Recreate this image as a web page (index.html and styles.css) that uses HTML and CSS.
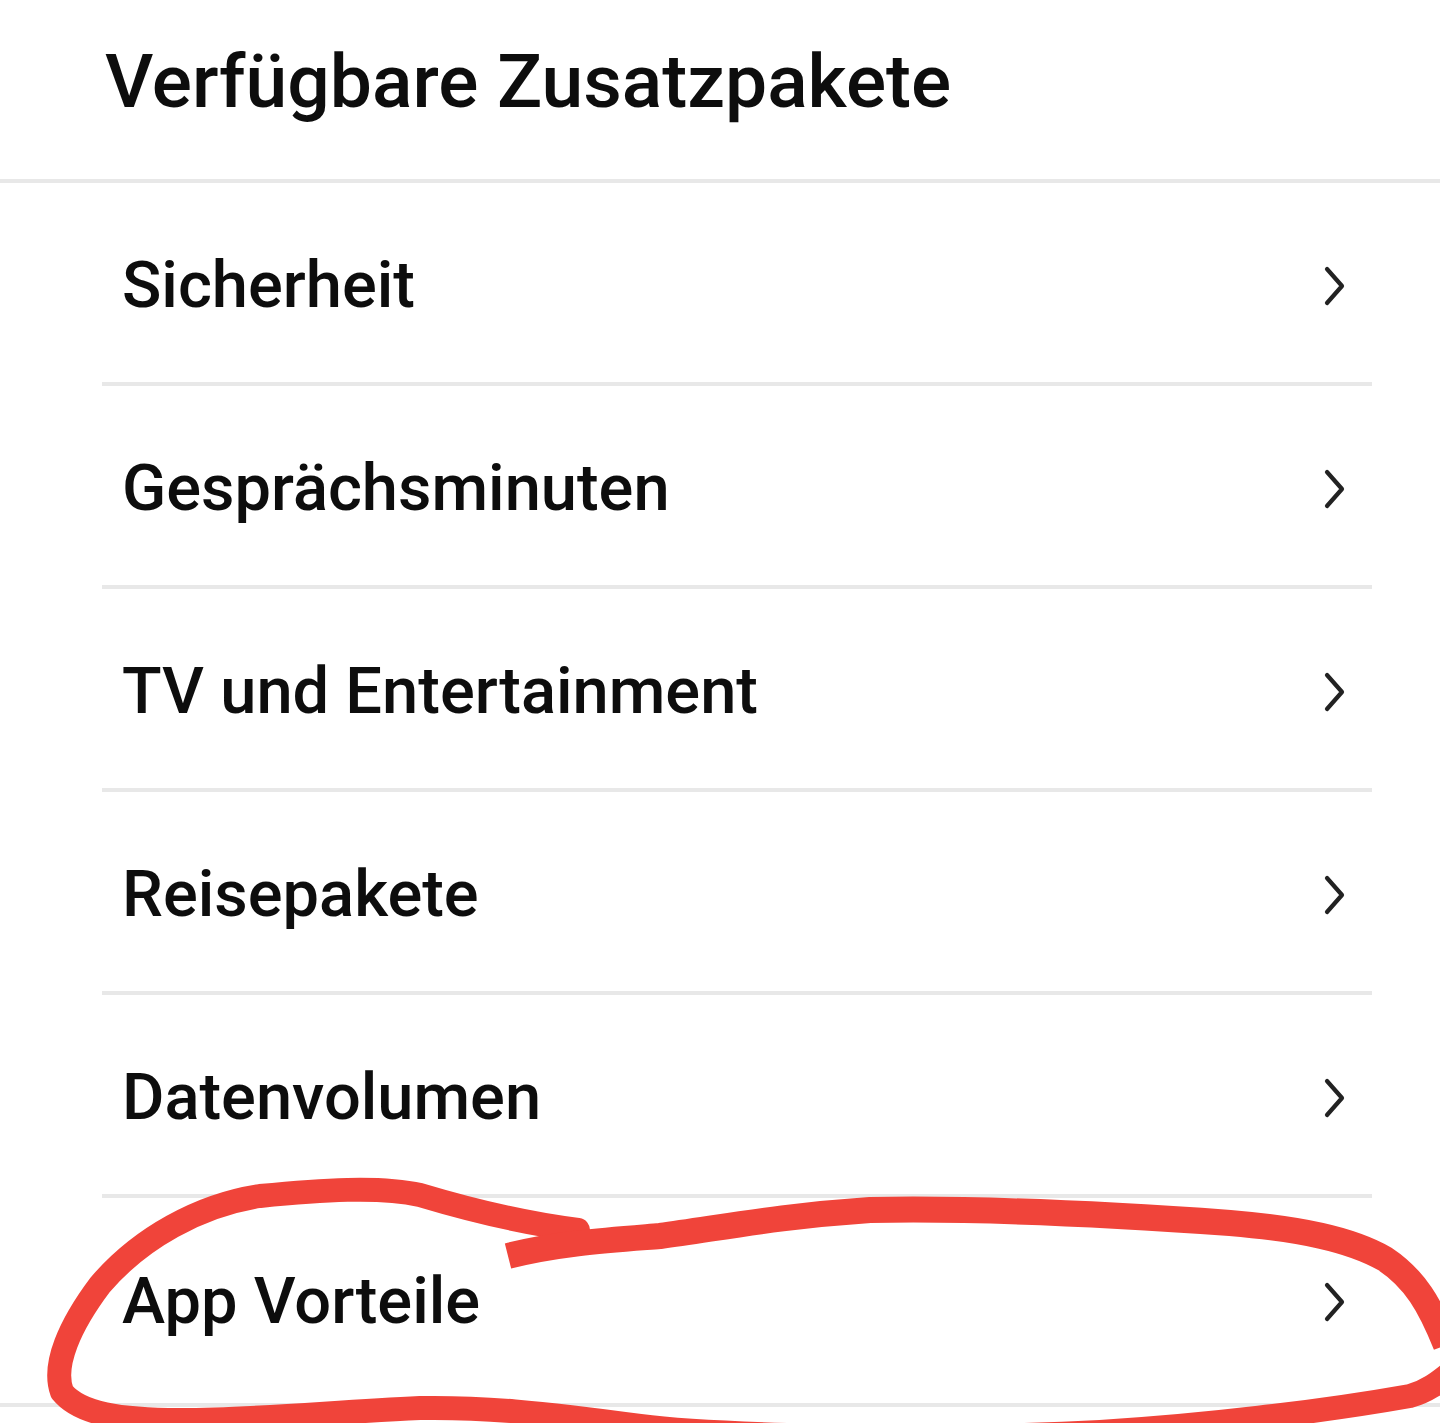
FILE: index.html
```html
<!DOCTYPE html>
<html lang="de">
<head>
<meta charset="utf-8">
<title>Verfügbare Zusatzpakete</title>
<link rel="stylesheet" href="styles.css">
</head>
<body>
<main class="page">
  <header class="head">
    <h1 class="title">Verfügbare Zusatzpakete</h1>
  </header>
  <ul class="list">
    <li class="item"><span class="label">Sicherheit</span><svg class="chevron" viewBox="0 0 24 40" width="24" height="40"><path d="M4 3 L19 20 L4 37"/></svg></li>
    <li class="item"><span class="label">Gesprächsminuten</span><svg class="chevron" viewBox="0 0 24 40" width="24" height="40"><path d="M4 3 L19 20 L4 37"/></svg></li>
    <li class="item"><span class="label">TV und Entertainment</span><svg class="chevron" viewBox="0 0 24 40" width="24" height="40"><path d="M4 3 L19 20 L4 37"/></svg></li>
    <li class="item"><span class="label">Reisepakete</span><svg class="chevron" viewBox="0 0 24 40" width="24" height="40"><path d="M4 3 L19 20 L4 37"/></svg></li>
    <li class="item"><span class="label">Datenvolumen</span><svg class="chevron" viewBox="0 0 24 40" width="24" height="40"><path d="M4 3 L19 20 L4 37"/></svg></li>
    <li class="item item-last"><span class="label">App Vorteile</span><svg class="chevron" viewBox="0 0 24 40" width="24" height="40"><path d="M4 3 L19 20 L4 37"/></svg></li>
  </ul>
  <div class="rule"></div>
  <svg class="scribble" viewBox="0 0 1440 1423" width="1440" height="1423">
    <path class="ink ink-thin" d="M578 1230 C 530 1224, 470 1210, 420 1195 C 380 1186, 320 1190, 260 1196 C 200 1205, 140 1238, 100 1285 C 70 1325, 52 1365, 62 1392 C 80 1414, 120 1420, 180 1420 C 260 1420, 330 1412, 420 1408 C 480 1407, 540 1412, 640 1426 C 700 1434, 900 1442, 1100 1432 C 1200 1426, 1320 1412, 1410 1396 C 1428 1391, 1440 1381, 1450 1373"/>
    <path class="ink ink-thick" d="M508 1256 C 560 1243, 610 1240, 660 1236 C 720 1228, 780 1216, 870 1210 C 980 1208, 1120 1215, 1230 1223 C 1300 1229, 1350 1239, 1385 1259 C 1415 1279, 1430 1305, 1446 1345"/>
  </svg>
</main>
</body>
</html>
```

FILE: styles.css
```css
* { box-sizing: border-box; }
html, body {
  margin: 0;
  padding: 0;
  background: #ffffff;
}
body {
  font-family: Roboto, "Noto Sans", "Liberation Sans", sans-serif;
  color: #0d0d0d;
}
.page {
  position: relative;
  width: 1440px;
  height: 1423px;
  overflow: hidden;
}
.head {
  height: 183px;
  border-bottom: 4px solid #e8e8e8;
  padding: 44px 0 0 105px;
}
.title {
  margin: 0;
  font-size: 75px;
  line-height: 1;
  font-weight: 500;
  letter-spacing: 0;
}
.list {
  list-style: none;
  margin: 0;
  padding: 0 68px 0 102px;
}
.item {
  display: flex;
  align-items: center;
  justify-content: space-between;
  height: 203px;
  border-bottom: 4px solid #e8e8e8;
  padding: 6px 25px 0 20px;
}
.item-last {
  height: 205px;
  border-bottom: none;
  padding-top: 2px;
}
.label {
  font-size: 65px;
  font-weight: 500;
  line-height: 1;
}
.chevron {
  display: block;
}
.chevron path {
  fill: none;
  stroke: #222222;
  stroke-width: 4.2;
  stroke-linecap: round;
  stroke-linejoin: round;
}
.rule {
  height: 4px;
  background: #e8e8e8;
}
.scribble {
  position: absolute;
  left: 0;
  top: 0;
  pointer-events: none;
}
.ink {
  fill: none;
  stroke: #f0443a;
  stroke-linejoin: round;
}
.ink-thin {
  stroke-width: 24;
  stroke-linecap: round;
}
.ink-thick {
  stroke-width: 26;
  stroke-linecap: butt;
}
```
